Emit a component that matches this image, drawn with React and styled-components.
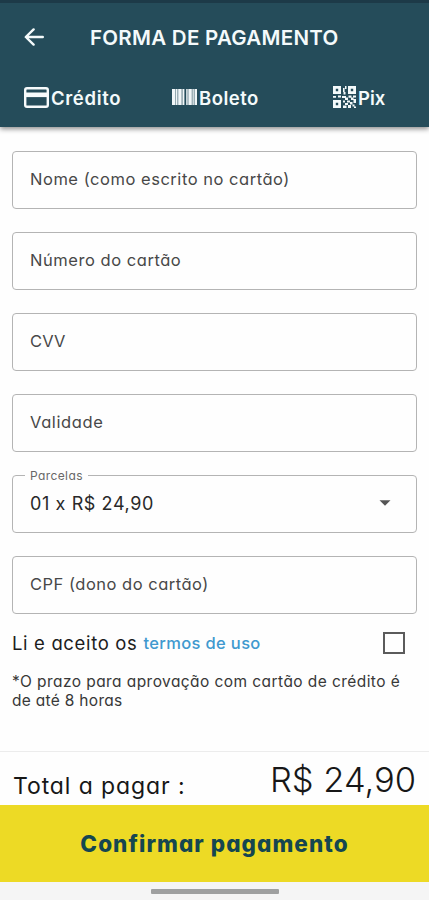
import { useState } from "react";
import styled, { createGlobalStyle } from "styled-components";

const fields = ["Nome (como escrito no cartão)", "Número do cartão", "CVV", "Validade"];
const spacings = [0.53, 0.54, 0.1, 0.6];

export default function App() {
  const [accepted, setAccepted] = useState(false);

  return (
    <>
      <GlobalStyle />
      <Screen>
        <Header>
          <TitleBar>
            <BackIcon />
            <Title>FORMA DE PAGAMENTO</Title>
          </TitleBar>
          <Tabs>
            <Tab>
              <CardIcon />
              <TabLabel spacing={0.65}>Crédito</TabLabel>
            </Tab>
            <Tab>
              <BarcodeIcon />
              <TabLabel spacing={0.5}>Boleto</TabLabel>
            </Tab>
            <Tab>
              <QrIcon />
              <TabLabel spacing={0}>Pix</TabLabel>
            </Tab>
          </Tabs>
        </Header>

        <Form>
          {fields.map((field, i) => (
            <Field key={field}>
              <Placeholder spacing={spacings[i]}>{field}</Placeholder>
            </Field>
          ))}
          <Field>
            <FloatingLabel>Parcelas</FloatingLabel>
            <SelectValue>01 x R$ 24,90</SelectValue>
            <Caret />
          </Field>
          <Field>
            <Placeholder spacing={0.5}>CPF (dono do cartão)</Placeholder>
          </Field>
        </Form>

        <Terms>
          <TermsText>Li e aceito os</TermsText>
          <TermsLink>termos de uso</TermsLink>
          <Checkbox checked={accepted} onChange={() => setAccepted(!accepted)} />
        </Terms>
        <Note>
          <NoteLine spacing={0.43}>*O prazo para aprovação com cartão de crédito é</NoteLine>
          <NoteLine spacing={0.3}>de até 8 horas</NoteLine>
        </Note>

        <Total>
          <TotalLabel>Total a pagar :</TotalLabel>
          <TotalValue>R$ 24,90</TotalValue>
        </Total>
        <Confirm>
          <ConfirmText>Confirmar pagamento</ConfirmText>
        </Confirm>
        <NavBar>
          <Handle />
        </NavBar>
      </Screen>
    </>
  );
}

function BackIcon() {
  return (
    <svg width="20" height="18" viewBox="0 0 20 18" fill="none" stroke="#f4fafb" strokeWidth="2.4" strokeLinecap="round" strokeLinejoin="round">
      <path d="M18.8 9H2M9.6 1.4 1.8 9l7.8 7.6" />
    </svg>
  );
}

function CardIcon() {
  return (
    <svg width="25" height="21" viewBox="0 0 25 21">
      <rect x="1.2" y="1.2" width="22.6" height="18.6" rx="1.8" fill="none" stroke="#f7fbfc" strokeWidth="2.4" />
      <rect x="2" y="5.5" width="21" height="4.6" fill="#f7fbfc" />
    </svg>
  );
}

function BarcodeIcon() {
  return (
    <svg width="25" height="16" viewBox="0 0 25 16" fill="#f1f6f8">
      <path d="M0 0h3v16H0zM4 0h1.4v16H4zM6.2 0h3.4v16H6.2zM10.6 0h1.8v16h-1.8zM14.2 0h1.4v16h-1.4zM16.4 0h3.4v16h-3.4zM20.6 0h1.2v16h-1.2zM22.7 0H25v16h-2.3z" />
      <path d="M3 0h1v16H3zM5.4 0h.8v16h-.8zM9.6 0h1v16h-1zM15.6 0h.8v16h-.8zM19.8 0h.8v16h-.8zM21.8 0h.9v16h-.9z" opacity=".55" />
    </svg>
  );
}

function QrIcon() {
  return (
    <svg width="23" height="22" viewBox="0 0 23 22" fill="#f4fafb">
      <path fillRule="evenodd" d="M0 0h8v8H0zM2.8 2.8v2.4h2.4V2.8zM15 0h8v8h-8zM17.8 2.8v2.4h2.4V2.8zM0 14h8v8H0zM2.8 16.8v2.4h2.4v-2.4z" />
      <path d="M10 2h1.6v4H10zM12 0h1.5v3H12zM10.5 6h2v2.5h-2zM0 10h3v1.8H0zM5 9.5h3v2H5zM9 10h4v2H9zM12 11.5h3v2.5h-3zM15.5 9.5h3v2.2h-3zM20 9.5h3v2h-3zM18 11.5h2.5v2.5H18zM10 14.5h2v2h-2zM14 14.5h3v2h-3zM20.5 13h2.5v4h-2.5zM12 17h3v2h-3zM17 16h2.5v2.5H17zM10 19.5h3.5V22H10zM15 19h3v3h-3zM19.5 18.5h2v2h-2zM21 20.5h2V22h-2z" />
    </svg>
  );
}

function Caret() {
  return (
    <svg width="12" height="6" viewBox="0 0 12 6">
      <path d="M.5.2h11L6 5.8z" fill="#555" />
    </svg>
  );
}

const GlobalStyle = createGlobalStyle`
  * {
    box-sizing: border-box;
  }
  body {
    margin: 0;
    background: #fefefe;
    font-family: Inter, "Liberation Sans", sans-serif;
    font-feature-settings: "cv11";
  }
`;

const Screen = styled.main`
  width: 429px;
  height: 900px;
  display: flex;
  flex-direction: column;
  overflow: hidden;
`;

const Header = styled.header`
  height: 127px;
  flex: none;
  border-top: 3px solid #1d3a48;
  background: #254c5a;
  box-shadow: 0 2px 5px rgba(0, 0, 0, 0.45);
  color: #f4fafb;
`;

const TitleBar = styled.div`
  height: 68px;
  padding-left: 24px;
  display: flex;
  align-items: center;
  gap: 46px;
`;

const Title = styled.h1`
  margin: 0;
  font-size: 20.5px;
  font-weight: 600;
  letter-spacing: 0.28px;
  white-space: nowrap;
`;

const Tabs = styled.nav`
  height: 52px;
  padding-left: 24px;
  display: grid;
  grid-template-columns: 148px 161px auto;
  align-items: center;
`;

const Tab = styled.div`
  display: flex;
  align-items: center;
  gap: 2px;
`;

const TabLabel = styled.span`
  font-size: 18.5px;
  font-weight: 600;
  line-height: 20px;
  padding-top: 2px;
  letter-spacing: ${props => props.spacing}px;
`;

const Form = styled.section`
  padding: 24px 12px 0 12px;
  display: flex;
  flex-direction: column;
  gap: 23px;
`;

const Field = styled.div`
  position: relative;
  height: 58px;
  padding: 0 25px 3px 17px;
  display: flex;
  align-items: center;
  justify-content: space-between;
  border: 1px solid #b4b4b4;
  border-radius: 4px;
`;

const Placeholder = styled.span`
  font-size: 16.5px;
  color: #484848;
  letter-spacing: ${props => props.spacing}px;
`;

const FloatingLabel = styled.span`
  position: absolute;
  top: -8px;
  left: 12px;
  padding: 0 5px;
  background: #fefefe;
  color: #686868;
  font-size: 12px;
  line-height: 16px;
  letter-spacing: 0.4px;
`;

const SelectValue = styled.span`
  padding-top: 2px;
  font-size: 18px;
  color: #292929;
  letter-spacing: 0.6px;
`;

const Terms = styled.div`
  height: 58px;
  padding: 0 24px 1px 12px;
  display: flex;
  align-items: center;
`;

const TermsText = styled.span`
  font-size: 18.5px;
  color: #1c1c1c;
  letter-spacing: 0.65px;
`;

const TermsLink = styled.a`
  margin-left: 6px;
  font-size: 16.5px;
  font-weight: 500;
  color: #4099cf;
  letter-spacing: 0.35px;
`;

const Checkbox = styled.input.attrs({type: "checkbox"})`
  appearance: none;
  width: 22px;
  height: 22px;
  margin: 0 0 0 auto;
  border: 2px solid #5b5b5b;
  &:checked {
    background: #254c5a;
  }
`;

const Note = styled.p`
  margin: 0;
  padding-left: 12px;
  color: #383838;
`;

const NoteLine = styled.span`
  display: block;
  font-size: 15.5px;
  line-height: 19px;
  letter-spacing: ${props => props.spacing}px;
  white-space: nowrap;
`;

const Total = styled.div`
  height: 54px;
  margin-top: auto;
  padding: 0 13px;
  display: flex;
  align-items: flex-start;
  justify-content: space-between;
  flex: none;
  border-top: 1px solid #ececec;
  color: #171717;
`;

const TotalLabel = styled.span`
  font-size: 23px;
  line-height: 68px;
  letter-spacing: 0.9px;
`;

const TotalValue = styled.span`
  font-size: 34.5px;
  line-height: 55px;
  font-weight: 300;
`;

const Confirm = styled.button`
  height: 77px;
  flex: none;
  border: 0;
  padding: 0;
  background: #edda25;
  color: #154650;
  font-family: inherit;
  font-feature-settings: inherit;
`;

const ConfirmText = styled.span`
  font-size: 22.5px;
  font-weight: 800;
  letter-spacing: 1.05px;
`;

const NavBar = styled.footer`
  height: 18px;
  flex: none;
  padding-top: 7px;
  background: #f5f5f5;
`;

const Handle = styled.div`
  width: 128px;
  height: 5px;
  margin: 0 auto;
  border-radius: 1px;
  background: #9fa0a0;
`;
